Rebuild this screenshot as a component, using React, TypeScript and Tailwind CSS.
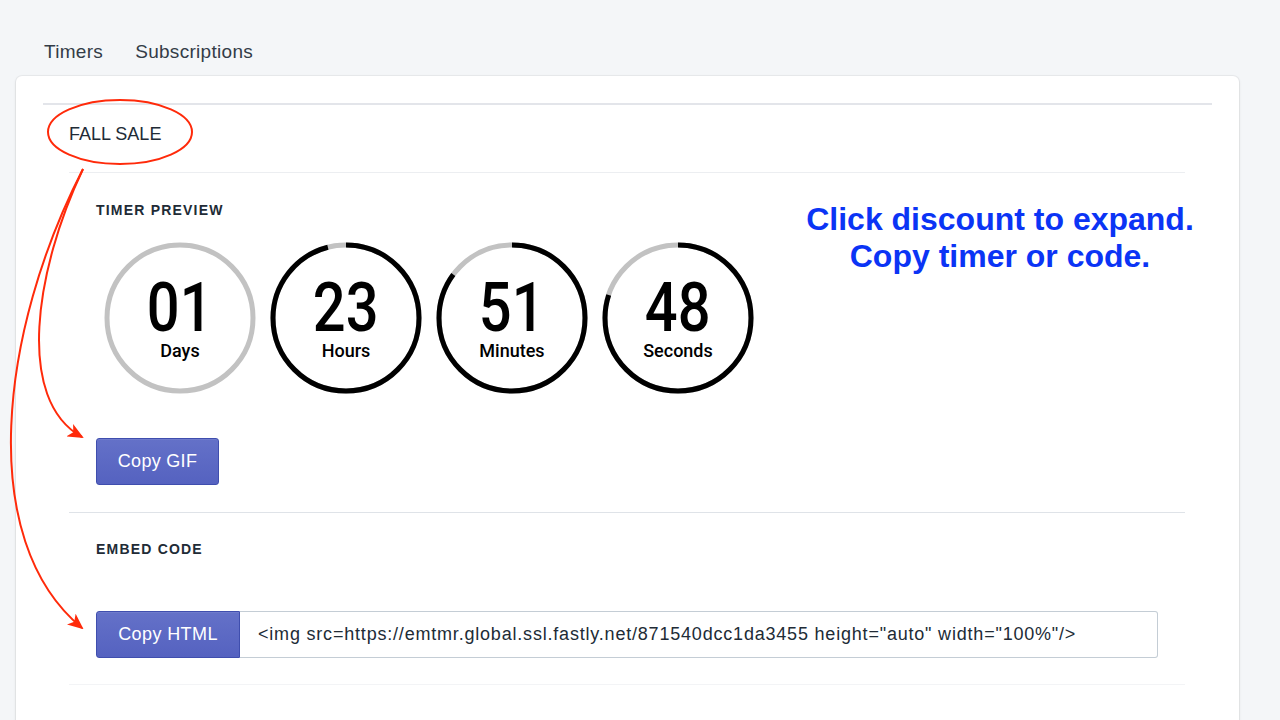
const timers = [
  { value: "01", label: "Days", fraction: 0 },
  { value: "23", label: "Hours", fraction: 23 / 24 },
  { value: "51", label: "Minutes", fraction: 51 / 60 },
  { value: "48", label: "Seconds", fraction: 48 / 60 },
];

const embed =
  '<img src=https://emtmr.global.ssl.fastly.net/871540dcc1da3455 height="auto" width="100%"/>';

function Ring({ value, label, fraction }: { value: string; label: string; fraction: number }) {
  const r = 73;
  const c = 2 * Math.PI * r;
  return (
    <div className="relative w-[152px] h-[152px] flex flex-col items-center">
      <svg width="152" height="152" viewBox="0 0 152 152" className="absolute inset-0">
        <circle cx="76" cy="76" r={r} fill="none" stroke="#c2c2c2" strokeWidth="5" />
        {fraction > 0 && (
          <circle
            cx="76"
            cy="76"
            r={r}
            fill="none"
            stroke="#000"
            strokeWidth="5"
            strokeDasharray={`${c * fraction} ${c}`}
            transform="rotate(-90 76 76)"
          />
        )}
      </svg>
      <div className="relative mt-[40px] text-[68px] leading-[52px] font-medium text-black scale-x-85 font-['Roboto',sans-serif]">
        {value}
      </div>
      <div className="relative mt-[8px] text-[18px] leading-[18px] font-medium text-black font-['Roboto',sans-serif]">
        {label}
      </div>
    </div>
  );
}

function Annotations() {
  return (
    <svg
      className="absolute inset-0 pointer-events-none"
      width="1280"
      height="720"
      viewBox="0 0 1280 720"
    >
      <defs>
        <marker
          id="head"
          markerWidth="16"
          markerHeight="14"
          refX="14"
          refY="7"
          orient="auto"
          markerUnits="userSpaceOnUse"
        >
          <path d="M0,0 L16,7 L0,14 L4,7 Z" fill="#ff2a0a" />
        </marker>
      </defs>
      <ellipse cx="120" cy="132" rx="72" ry="32" fill="none" stroke="#ff2a0a" strokeWidth="2" />
      <path
        d="M83 169 C35 270, 15 400, 82 437"
        fill="none"
        stroke="#ff2a0a"
        strokeWidth="2"
        markerEnd="url(#head)"
      />
      <path
        d="M83 169 C0 330, -25 540, 82 628"
        fill="none"
        stroke="#ff2a0a"
        strokeWidth="2"
        markerEnd="url(#head)"
      />
    </svg>
  );
}

export default function App() {
  return (
    <div className="relative h-[720px] overflow-hidden bg-[#f4f6f8] text-[#212b36] font-['Liberation_Sans',Arial,sans-serif]">
      <div className="flex gap-[32px] pl-[44px] pt-[40px] text-[19px] leading-[24px] tracking-[0.3px] text-[#333c47]">
        <span>Timers</span>
        <span>Subscriptions</span>
      </div>

      <div className="ml-[16px] mr-[41px] mt-[12px] h-[700px] bg-white rounded-[6px] shadow-[0_0_0_1px_rgba(63,63,68,0.05),0_1px_3px_0_rgba(63,63,68,0.15)] px-[27px] pt-[27px]">
        <div className="border-t-2 border-[#e3e5ea]">
          <div className="h-[67px] pt-[18px] pl-[26px] text-[18px] leading-[22px] text-[#212b36]">
            FALL SALE
          </div>

          <div className="ml-[26px] mr-[27px] border-t border-[#eceef1] pl-[27px] pb-[27px]">
            <div className="flex">
              <div className="w-[676px] pt-[27px]">
                <h3 className="text-[14px] leading-[20px] font-bold tracking-[1.2px]">TIMER PREVIEW</h3>
                <div className="flex gap-[14px] pl-[8px] mt-[22px]">
                  {timers.map((t) => (
                    <Ring key={t.label} {...t} />
                  ))}
                </div>
                <button className="mt-[44px] h-[47px] w-[123px] rounded-[3px] border border-[#3f4eae] bg-gradient-to-b from-[#6471c8] to-[#5562c0] text-white text-[18px] tracking-[0.3px] shadow-[inset_0_1px_0_0_#6f7bcc]">
                  Copy GIF
                </button>
              </div>
              <div className="flex-1 -mr-[17px] pl-[26px] pt-[28px] text-center text-[32px] leading-[37px] font-bold text-[#0b34f5] whitespace-nowrap">
                <p>Click discount to expand.</p>
                <p>Copy timer or code.</p>
              </div>
            </div>
          </div>

          <div className="ml-[26px] mr-[27px] border-t border-[#dfe3e8] pl-[27px] pr-[27px] pb-[26px]">
            <h3 className="pt-[26px] text-[14px] leading-[20px] font-bold tracking-[1.2px]">EMBED CODE</h3>
            <div className="flex mt-[52px] h-[47px]">
              <button className="w-[144px] rounded-l-[3px] border border-[#3f4eae] bg-gradient-to-b from-[#6471c8] to-[#5562c0] text-white text-[18px] tracking-[0.4px] shadow-[inset_0_1px_0_0_#6f7bcc]">
                Copy HTML
              </button>
              <div className="flex-1 flex items-center pl-[18px] border border-l-0 border-[#c4cdd5] rounded-r-[3px] text-[18px] tracking-[0.8px] text-[#212b36] whitespace-nowrap overflow-hidden">
                {embed}
              </div>
            </div>
          </div>
          <div className="ml-[26px] mr-[27px] border-t border-[#f3f4f6]" />
        </div>
      </div>

      <Annotations />
    </div>
  );
}
